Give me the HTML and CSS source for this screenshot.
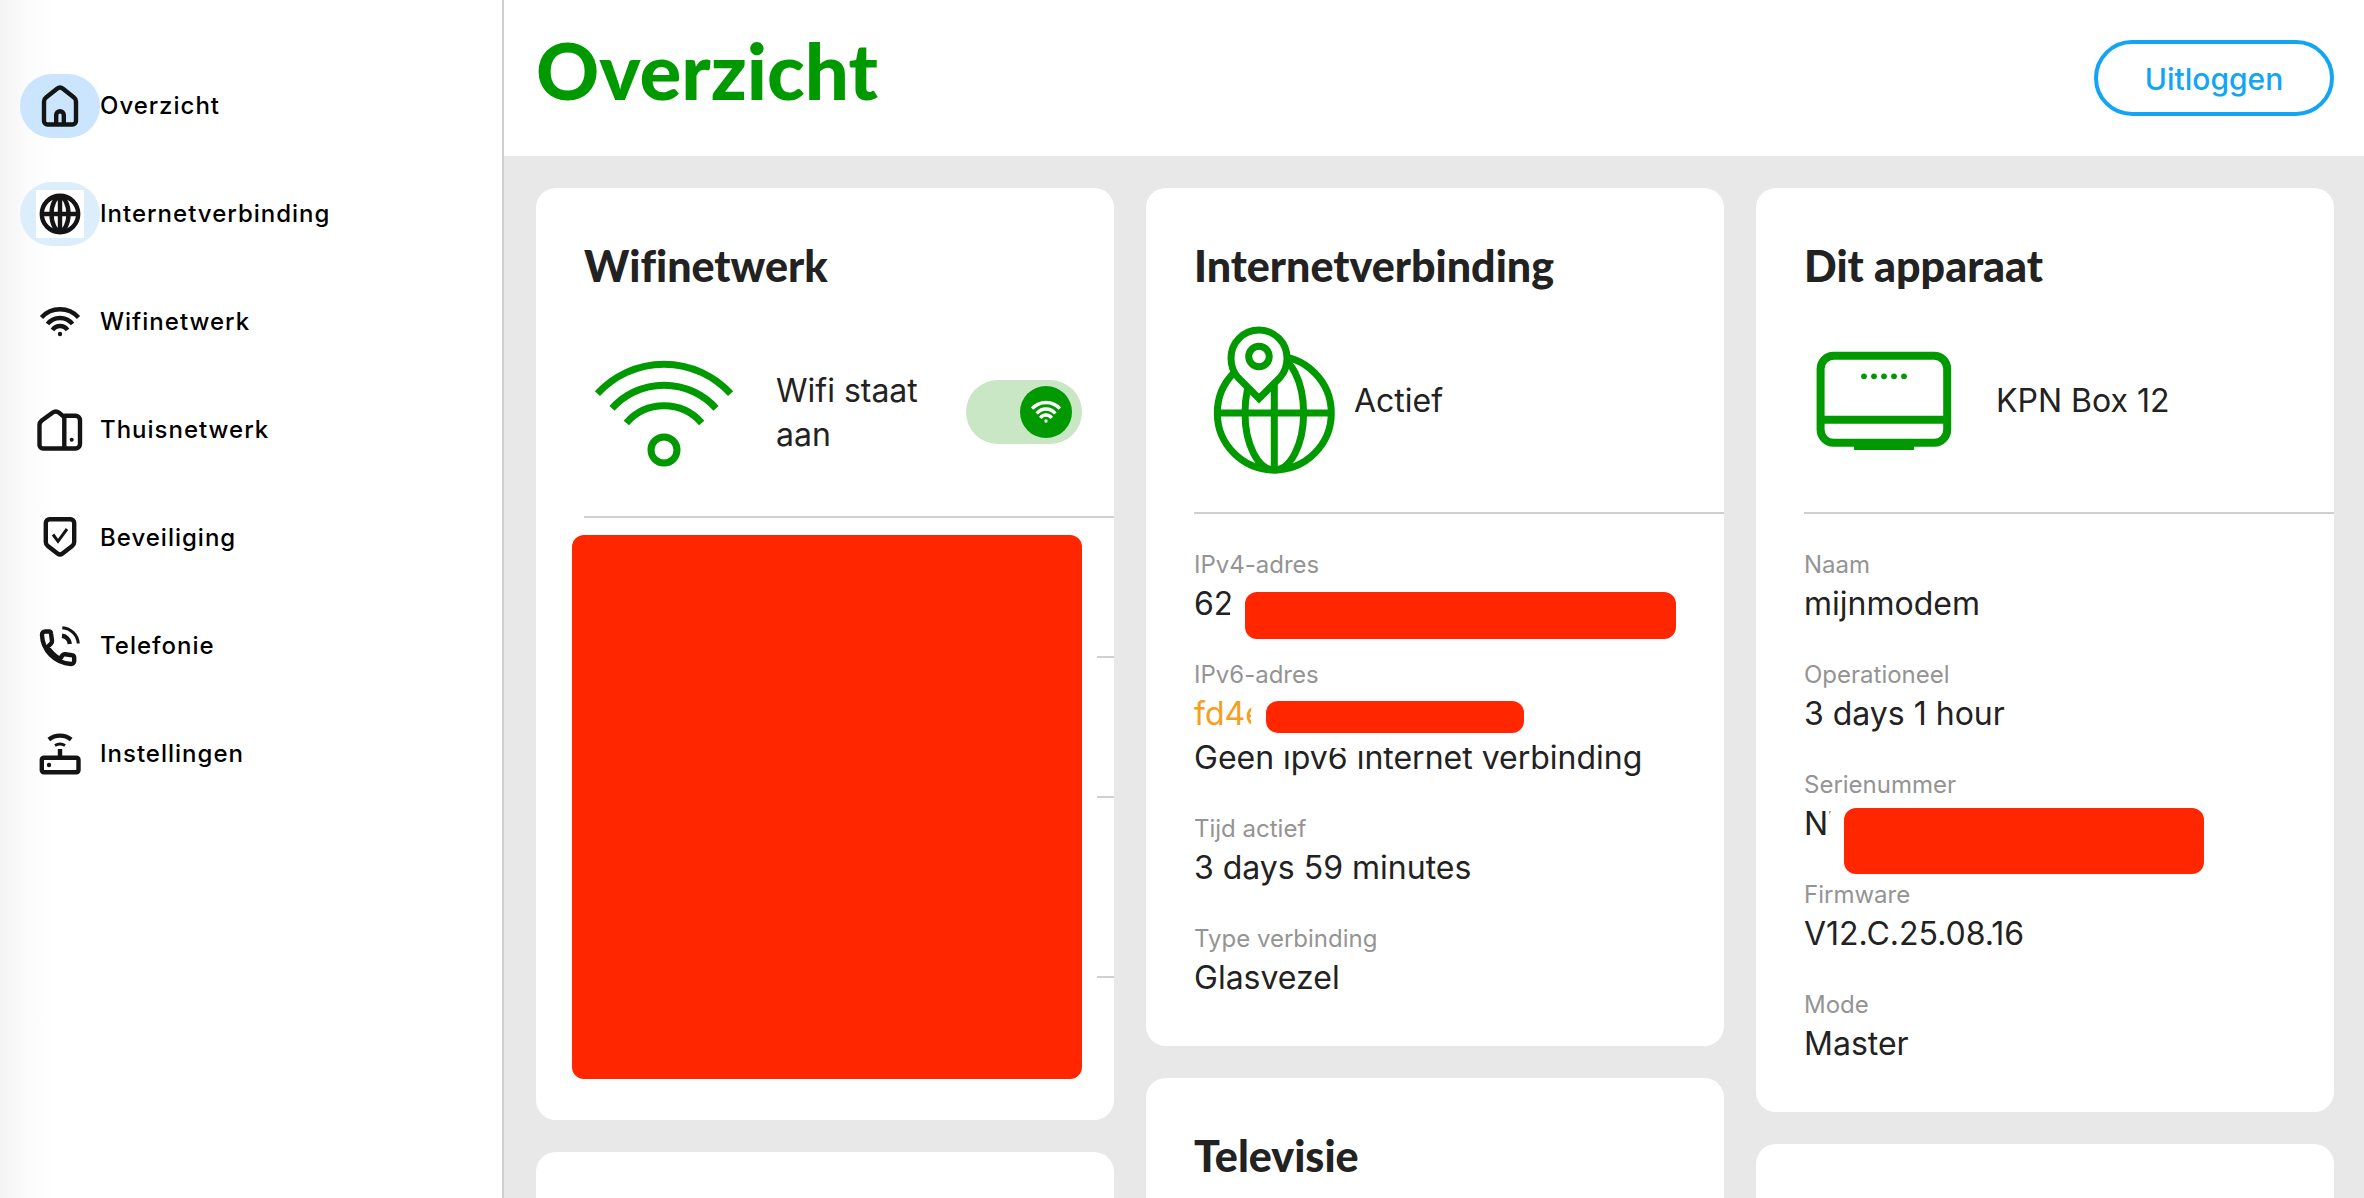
FILE: index.html
```html
<!DOCTYPE html>
<html lang="nl">
  <head>
    <title>Overzicht</title>
    <meta charset="utf-8" />
    <meta name="viewport" content="width=device-width, initial-scale=1.0" />
    <link rel="stylesheet" href="styles.css">
  </head>
  <body>
    <div class="app">
      <nav class="sidebar">
        <a class="nav-item active" href="#overzicht">
          <span class="nav-pill">
            <svg class="nav-icon" viewBox="0 0 48 48">
              <path d="M8 19.5q0-2.5 2-4L21 6.8q3-2.400 6 0L38 15.5q2 1.5 2 4V39a3.5 3.5 0 0 1-3.5 3.5h-25A3.5 3.5 0 0 1 8 39Z"/>
              <path d="M20.2 42v-9a3.8 3.8 0 0 1 7.6 0v9"/>
            </svg>
          </span>
          Overzicht
        </a>
        <a class="nav-item hover" href="#internet">
          <span class="nav-pill">
            <svg class="nav-icon boxed" viewBox="0 0 48 48">
              <circle cx="24" cy="24" r="18.2"/>
              <ellipse cx="24" cy="24" rx="8.5" ry="17"/>
              <path d="M24 6v36M6 24h36"/>
            </svg>
          </span>
          Internetverbinding
        </a>
        <a class="nav-item" href="#wifi">
          <span class="nav-pill">
            <svg class="nav-icon" viewBox="0 0 48 48">
              <g id="wifi-small">
                <path d="M5.5 19.5A25 25 0 0 1 42.5 19.5M11.5 26A16 16 0 0 1 36.5 26M16.5 32A9 9 0 0 1 31.5 32"/>
                <circle class="dot" cx="24" cy="36" r="2.2"/>
              </g>
            </svg>
          </span>
          Wifinetwerk
        </a>
        <a class="nav-item" href="#thuis">
          <span class="nav-pill">
            <svg class="nav-icon" viewBox="0 0 48 48">
              <path d="M28.3 42.5H7A3.5 3.5 0 0 1 3.5 39V19q0-2.5 2-4.2L16.8 6.5q3-2.2 6 0L28.3 11ZM28.3 9.7h11.2a4.5 4.5 0 0 1 4.5 4.5V38a4.5 4.5 0 0 1-4.5 4.5H27"/>
              <circle class="dot" cx="35.7" cy="33.7" r="2"/>
            </svg>
          </span>
          Thuisnetwerk
        </a>
        <a class="nav-item" href="#beveiliging">
          <span class="nav-pill">
            <svg class="nav-icon" viewBox="0 0 48 48">
              <path d="M13.5 5.3h21A3.7 3.7 0 0 1 38.2 9v19q0 2.5-2 4l-9.7 7.5q-2.5 2-5 0L11.8 32q-2-1.5-2-4V9a3.7 3.7 0 0 1 3.7-3.7Z"/>
              <path class="thin" d="M17 20.5l5 6.8L31 15"/>
            </svg>
          </span>
          Beveiliging
        </a>
        <a class="nav-item" href="#telefonie">
          <span class="nav-pill">
            <svg class="nav-icon" viewBox="0 0 48 48">
              <path d="M9.5 9.5H13a2 2 0 0 1 2 1.800L16 19q.2 1.600-1 2.600L11.5 25c4 6.5 7 9 12.5 12l2.5-3.800a3 3 0 0 1 2.600-1l6.900 1a2.200 2.200 0 0 1 2.200 2.200V39a3 3 0 0 1-3.200 3C18.5 41 6.5 28 6 13a3.200 3.200 0 0 1 3.5-3.5Z"/>
              <path d="M26 13.8A9 9 0 0 1 33.8 22"/>
              <path class="thin" d="M26.3 5.7A17 17 0 0 1 42.3 21.5"/>
            </svg>
          </span>
          Telefonie
        </a>
        <a class="nav-item" href="#instellingen">
          <span class="nav-pill">
            <svg class="nav-icon" viewBox="0 0 48 48">
              <rect x="5.8" y="27.8" width="36.7" height="14.5" rx="2"/>
              <path d="M24 19v8M12.8 9.5A18.3 18.3 0 0 1 35.2 9.5"/>
              <path class="thin" d="M19 15.5Q24 12.5 29 15.5"/>
              <circle class="dot" cx="13" cy="35" r="2.2"/>
            </svg>
          </span>
          Instellingen
        </a>
      </nav>

      <div class="page">
        <header class="topbar">
          <h1>Overzicht</h1>
          <button class="logout" type="button">Uitloggen</button>
        </header>

        <main class="columns">
          <div class="column">
            <section class="card">
              <h2>Wifinetwerk</h2>
              <div class="summary summary-wifi">
                <svg class="big-icon" viewBox="0 0 160 160">
                  <path d="M13.4 61.7A90 90 0 0 1 146.6 61.7M28 76.3A70 70 0 0 1 132 76.3M42.3 91A50 50 0 0 1 117.7 91"/>
                  <circle cx="80" cy="118" r="13"/>
                </svg>
                <label class="status" for="wifi-toggle">Wifi staat aan</label>
                <span class="toggle">
                  <input type="checkbox" id="wifi-toggle" checked>
                  <svg class="toggle-icon" viewBox="0 0 48 48"><use href="#wifi-small"/></svg>
                </span>
              </div>
              <div class="networks">
                <div class="network"></div>
                <div class="network"></div>
                <div class="network tall"></div>
                <div class="network"></div>
                <span class="redacted redacted-networks"></span>
              </div>
            </section>
            <section class="card"></section>
          </div>

          <div class="column">
            <section class="card">
              <h2>Internetverbinding</h2>
              <div class="summary summary-tight">
                <svg class="big-icon" viewBox="0 0 160 160">
                  <circle cx="80.3" cy="93" r="57"/>
                  <ellipse cx="80.3" cy="93" rx="29.3" ry="57"/>
                  <path d="M80.3 50v100M23 93h114"/>
                  <path class="pin" d="M65 78.5L44 57.5C39 52 37 45 37 38a28 28 0 0 1 56 0C93 45 91 52 86 57.5Z"/>
                  <circle cx="65" cy="36.5" r="10.3"/>
                </svg>
                <span class="status">Actief</span>
              </div>
              <dl class="fields">
                <div class="field">
                  <dt>IPv4-adres</dt>
                  <dd>62<span class="redacted redacted-ipv4"></span></dd>
                </div>
                <div class="field">
                  <dt>IPv6-adres</dt>
                  <dd class="warning">fd4e<span class="redacted redacted-ipv6"></span></dd>
                  <dd>Geen ipv6 internet verbinding</dd>
                </div>
                <div class="field">
                  <dt>Tijd actief</dt>
                  <dd>3 days 59 minutes</dd>
                </div>
                <div class="field">
                  <dt>Type verbinding</dt>
                  <dd>Glasvezel</dd>
                </div>
              </dl>
            </section>
            <section class="card">
              <h2>Televisie</h2>
            </section>
          </div>

          <div class="column">
            <section class="card">
              <h2>Dit apparaat</h2>
              <div class="summary">
                <svg class="big-icon modem" viewBox="0 0 160 160">
                  <rect x="16.6" y="35.8" width="126.6" height="87" rx="13"/>
                  <path d="M18 99.7h124"/>
                  <path class="solid" d="M50 123h60v7H50z"/>
                  <g class="solid">
                    <circle cx="60" cy="56.3" r="2.9"/>
                    <circle cx="70" cy="56.3" r="2.9"/>
                    <circle cx="80" cy="56.3" r="2.9"/>
                    <circle cx="90" cy="56.3" r="2.9"/>
                    <circle cx="100" cy="56.3" r="2.9"/>
                  </g>
                </svg>
                <span class="status">KPN Box 12</span>
              </div>
              <dl class="fields">
                <div class="field">
                  <dt>Naam</dt>
                  <dd>mijnmodem</dd>
                </div>
                <div class="field">
                  <dt>Operationeel</dt>
                  <dd>3 days 1 hour</dd>
                </div>
                <div class="field">
                  <dt>Serienummer</dt>
                  <dd>NT<span class="redacted redacted-serial"></span></dd>
                </div>
                <div class="field">
                  <dt>Firmware</dt>
                  <dd>V12.C.25.08.16</dd>
                </div>
                <div class="field">
                  <dt>Mode</dt>
                  <dd>Master</dd>
                </div>
              </dl>
            </section>
            <section class="card"></section>
          </div>
        </main>
      </div>
    </div>
  </body>
</html>
```

FILE: styles.css
```css
* {
  box-sizing: border-box;
}
body {
  margin: 0;
  background-color: #e8e8e8;
  color: #222;
  font-family: Inter, "Liberation Sans", sans-serif;
  font-size: 32px;
  line-height: 44px;
}
.app {
  display: flex;
  height: 100vh;
  overflow: hidden;
}

/* Sidebar */
.sidebar {
  flex: 0 0 504px;
  display: flex;
  flex-direction: column;
  gap: 44px;
  padding: 74px 20px;
  border-right: 2px solid #d0d0d0;
  background: linear-gradient(to right, #f4f4f4, #fcfcfc 30px, #fff 60px);
}
.nav-item {
  display: flex;
  align-items: center;
  color: #000;
  font-size: 24px;
  font-weight: 500;
  letter-spacing: 1px;
  line-height: 32px;
  text-decoration: none;
}
.nav-pill {
  display: flex;
  align-items: center;
  justify-content: center;
  width: 80px;
  height: 64px;
  border-radius: 32px;
}
.active .nav-pill {
  background-color: #cae5fd;
}
.hover .nav-pill {
  background-color: #dcedfc;
}
.nav-icon {
  width: 48px;
  height: 48px;
  color: #141414;
  fill: none;
  stroke: #141414;
  stroke-width: 4.4;
}
.boxed {
  background-color: #fff;
}
.thin {
  stroke-width: 3;
}
.dot {
  fill: currentColor;
  stroke: none;
}

/* Header */
.page {
  flex: 1;
  min-width: 0;
}
.topbar {
  display: flex;
  justify-content: space-between;
  align-items: flex-start;
  padding: 40px 30px 40px 32px;
  background-color: #fff;
}
h1 {
  margin: 0;
  color: #009900;
  font-family: Lato, sans-serif;
  font-size: 78px;
  font-weight: 900;
  line-height: 60px;
}
.logout {
  width: 240px;
  height: 76px;
  padding: 2px 0 0;
  border: 4px solid #12a5f4;
  border-radius: 38px;
  background-color: #fff;
  color: #12a5f4;
  font-family: inherit;
  font-size: 30px;
  font-weight: 500;
}

/* Cards */
.columns {
  display: grid;
  grid-template-columns: repeat(3, 1fr);
  gap: 32px;
  padding: 32px 30px 32px 32px;
}
.column {
  display: flex;
  flex-direction: column;
  gap: 32px;
}
.card {
  min-height: 200px;
  padding: 48px 0 46px 48px;
  border-radius: 20px;
  background-color: #fff;
}
h2 {
  margin: 0 0 24px;
  font-family: Lato, sans-serif;
  font-size: 43px;
  font-variant-ligatures: none;
  font-weight: 900;
  line-height: 60px;
}
.summary {
  display: flex;
  align-items: center;
  gap: 32px;
  padding: 0 32px 32px 0;
  border-bottom: 2px solid #d0d0d0;
}
.summary-tight {
  gap: 0;
}
.summary-wifi {
  padding: 12px 32px 24px 0;
}
.big-icon {
  flex: none;
  width: 160px;
  height: 160px;
  fill: none;
  stroke: #009900;
  stroke-width: 7;
}
.modem {
  stroke-width: 8;
}
.pin {
  fill: #fff;
}
.solid {
  fill: #009900;
  stroke: none;
}
.status {
  flex: 1;
  padding-top: 2px;
}

/* Wifi switch */
.toggle {
  position: relative;
  display: flex;
}
.toggle input {
  appearance: none;
  display: flex;
  align-items: center;
  justify-content: flex-end;
  width: 116px;
  height: 64px;
  margin: 0;
  padding: 0 10px;
  border-radius: 32px;
  background-color: #c9e6c5;
}
.toggle input::before {
  content: '';
  width: 52px;
  height: 52px;
  border-radius: 50%;
  background-color: #009900;
}
.toggle-icon {
  position: absolute;
  top: 14px;
  right: 18px;
  width: 36px;
  height: 36px;
  color: #fff;
  fill: none;
  stroke: #fff;
  stroke-width: 4.4;
  pointer-events: none;
}

/* Details */
.fields {
  display: flex;
  flex-direction: column;
  gap: 32px;
  margin: 0;
  padding-top: 34px;
}
dt {
  color: #949494;
  font-size: 24px;
  line-height: 34px;
}
dd {
  position: relative;
  margin: 0;
}
.warning {
  color: #f99d1c;
}
.networks {
  position: relative;
}
.network {
  height: 140px;
  border-bottom: 2px solid #d0d0d0;
}
.network.tall {
  height: 180px;
}
.network:last-of-type {
  height: 96px;
  border-bottom: 0;
}

/* Private values, painted over with a clear edge */
.redacted {
  position: absolute;
  z-index: 1;
  border-radius: 12px;
  background-color: #ff2600;
  box-shadow: 0 0 0 15px #fff;
}
.redacted-networks {
  top: 17px;
  bottom: -5px;
  left: -12px;
  right: 32px;
}
.redacted-ipv4 {
  top: 10px;
  left: 51px;
  width: 431px;
  height: 47px;
}
.redacted-ipv6 {
  top: 9px;
  left: 72px;
  width: 258px;
  height: 32px;
}
.redacted-serial {
  top: 6px;
  left: 40px;
  width: 360px;
  height: 66px;
}
```
